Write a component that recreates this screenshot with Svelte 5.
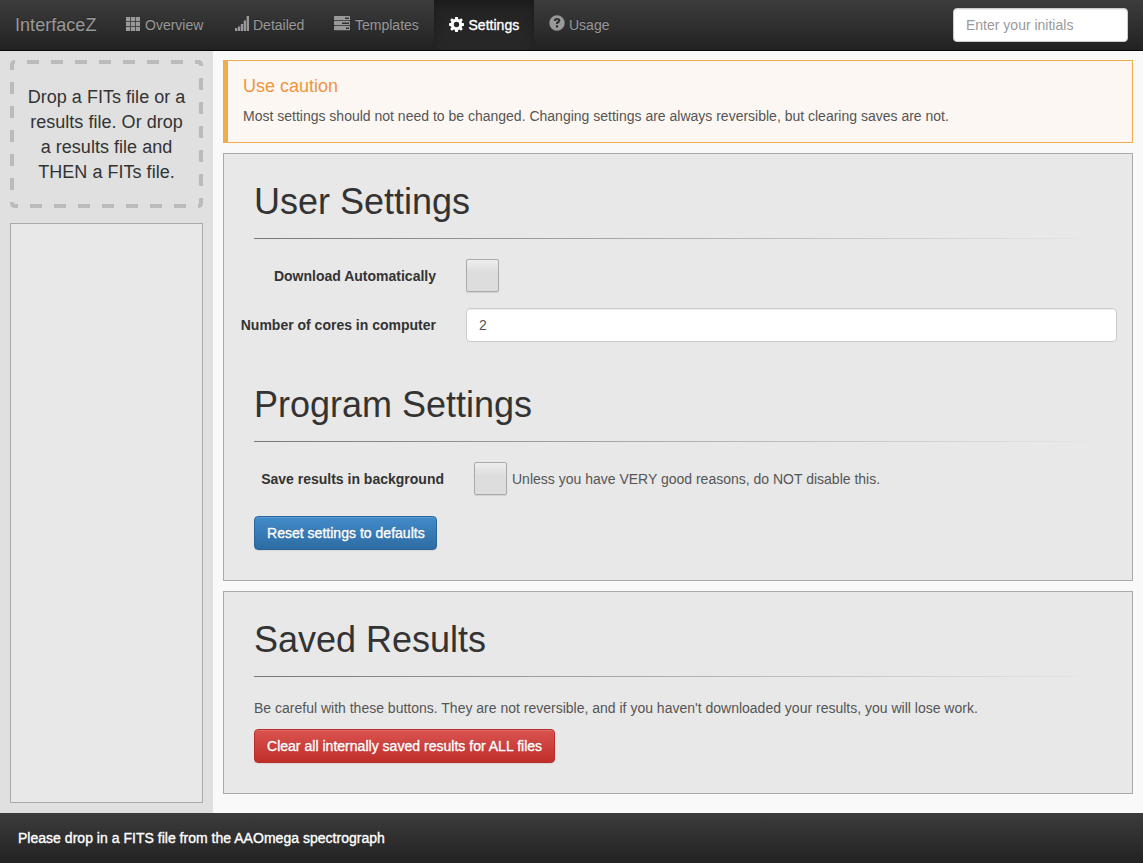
<script>
  let initials = $state('');
  let cores = $state('2');
</script>

<div class="app">
  <nav class="navbar">
    <div class="brand">InterfaceZ</div>
    <ul class="nav">
      <li style:width="108px">
        <svg width="14" height="14" viewBox="0 0 14 14"><path d="M0 0h4.200v4.200H0zM4.900 0h4.200v4.200H4.900zM9.800 0H14v4.200H9.800zM0 4.900h4.200v4.200H0zM4.900 4.900h4.200v4.200H4.900zM9.800 4.900H14v4.200H9.800zM0 9.800h4.200V14H0zM4.900 9.800h4.200V14H4.900zM9.800 9.800H14V14H9.800z" /></svg>
        <span>Overview</span>
      </li>
      <li style:width="101px">
        <svg width="14" height="15" viewBox="0 0 14 15"><path d="M0 12h2.300v3H0zM2.900 10.500h2.300V15H2.900zM5.800 8h2.300v7H5.800zM8.700 4.500H11V15H8.700zM11.600 0H14v15h-2.400z" /></svg>
        <span>Detailed</span>
      </li>
      <li style:width="114px">
        <svg width="16" height="15" viewBox="0 0 16 15"><path fill-rule="evenodd" d="M.7 0h14.600q.7 0 .7.700v2.900q0 .7-.7.700H.7q-.7 0-.7-.7V.7Q0 0 .7 0zM11 1.400v1.500h4V1.400zM.7 5h14.600q.7 0 .7.700v2.900q0 .7-.7.700H.7q-.7 0-.7-.7V5.700Q0 5 .7 5zM8 6.400v1.500h7V6.400zM.7 10h14.600q.7 0 .7.700v2.900q0 .7-.7.700H.7q-.7 0-.7-.7v-2.900Q0 10 .7 10zM12 11.400v1.500h3v-1.500z" /></svg>
        <span>Templates</span>
      </li>
      <li class="active" style:width="100px">
        <svg width="15" height="15" viewBox="0 0 15 15"><path fill-rule="evenodd" d="M6.200 0h2.600l.4 2 1.200.5L12.100 1.300 13.800 3 12.600 4.700l.5 1.200 1.900.4v2.500l-1.900.4-.5 1.200 1.200 1.700-1.700 1.700-1.700-1.200-1.200.5-.4 1.900H6.200l-.4-1.900-1.200-.5-1.700 1.200-1.700-1.700 1.200-1.700-.5-1.200L0 8.800V6.300l1.900-.4.5-1.200L1.200 3l1.700-1.700 1.700 1.200L5.800 2zM7.500 4.800a2.700 2.700 0 1 0 0 5.400 2.700 2.700 0 0 0 0-5.400z" /></svg>
        <span class="strong">Settings</span>
      </li>
      <li style:width="90px">
        <svg width="16" height="16" viewBox="0 0 16 16"><path fill-rule="evenodd" d="M8 .3a7.700 7.700 0 1 1 0 15.400A7.700 7.700 0 0 1 8 .3zM4.800 6h2.300c0-.8.300-1.200.9-1.200s.9.300.9.800c0 1-2 1.200-2 3.500h2.200c0-1.300 2.200-1.600 2.200-3.700C11.300 3.800 9.900 3 8.100 3 6 3 4.800 4.200 4.800 6zM6.900 10.200v2.200h2.200v-2.200z" /></svg>
        <span>Usage</span>
      </li>
    </ul>
    <input class="control initials" placeholder="Enter your initials" bind:value={initials} />
  </nav>

  <div class="body">
    <aside>
      <div class="drop">
        <svg class="dashes" width="193" height="148" viewBox="0 0 193 148">
          <path class="dashed" d="M17 2H173M191 18V126M2 22V130M20 146H176" />
          <path d="M2 10V5Q2 2 5 2M185 2H188Q191 2 191 5V6M191 138V143Q191 146 188 146M2 142V143Q2 146 5 146H8" />
        </svg>
        Drop a FITs file or a<br />results file. Or drop<br />a results file and<br />THEN a FITs file.
      </div>
      <div class="list"></div>
    </aside>
    <main>
      <section class="callout">
        <h4>Use caution</h4>
        <p>Most settings should not need to be changed. Changing settings are always reversible, but clearing saves are not.</p>
      </section>

      <section class="panel user">
        <h1>User Settings</h1>
        <hr />
        <div class="row">
          <b>Download Automatically</b>
          <button class="check" aria-label="Download Automatically"></button>
        </div>
        <div class="row cores">
          <b>Number of cores in computer</b>
          <input class="control" aria-label="Number of cores in computer" bind:value={cores} />
        </div>
        <h1 class="second">Program Settings</h1>
        <hr />
        <div class="row program">
          <b>Save results in background</b>
          <button class="check" aria-label="Save results in background"></button>
          <span class="note">Unless you have VERY good reasons, do NOT disable this.</span>
        </div>
        <button class="btn primary"><span class="strong">Reset settings to defaults</span></button>
      </section>

      <section class="panel saved">
        <h1>Saved Results</h1>
        <hr />
        <p class="careful">Be careful with these buttons. They are not reversible, and if you haven't downloaded your results, you will lose work.</p>
        <button class="btn danger"><span class="strong">Clear all internally saved results for ALL files</span></button>
      </section>
    </main>
  </div>

  <footer><span class="strong">Please drop in a FITS file from the AAOmega spectrograph</span></footer>
</div>

<style>
  :global(body) { margin: 0; overflow: hidden; }
  * { box-sizing: border-box; }
  .app {
    width: 1143px;
    height: 863px;
    display: flex;
    flex-direction: column;
    font: 14px/20px "Liberation Sans", Arial, sans-serif;
    color: #555;
    background: #f9f9f9;
    white-space: nowrap;
  }
  h1, h4, p, ul, hr { margin: 0; padding: 0; border: 0; }
  input, button { font: inherit; margin: 0; }
  .strong { -webkit-text-stroke: .35px #fff; letter-spacing: .02px; }
  .navbar {
    height: 51px;
    flex: none;
    display: flex;
    background: linear-gradient(#3c3c3c, #222);
    border-bottom: 1px solid #080808;
    color: #999;
    text-shadow: 0 -1px 0 rgba(0, 0, 0, .25);
  }
  .brand { width: 111px; padding: 15px 0 0 15px; font-size: 18px; letter-spacing: .04px; }
  .nav { display: flex; list-style: none; }
  .nav li { display: flex; padding: 15px 0 0 15px; gap: 5px; }
  .nav li svg { flex: none; margin-top: 2px; fill: currentColor; }
  .nav li:nth-child(2) { padding-left: 16px; gap: 4px; }
  .nav li:nth-child(2) svg { margin-top: 1px; }
  .nav li:nth-child(3) { padding-left: 14px; gap: 5px; }
  .nav li:nth-child(3) svg { margin-top: 1px; }
  .nav li:nth-child(4) { gap: 4.500px; }
  .nav li:nth-child(5) { gap: 4px; }
  .nav li:nth-child(5) svg { margin-top: 0; }
  .nav .active {
    color: #fff;
    background: linear-gradient(#222, #282828);
    box-shadow: inset 0 3px 9px rgba(0, 0, 0, .25);
  }
  .control {
    height: 34px;
    padding: 6px 12px;
    border: 1px solid #ccc;
    border-radius: 4px;
    background: #fff;
    color: #555;
    box-shadow: inset 0 1px 1px rgba(0, 0, 0, .075);
  }
  .initials { width: 175px; margin: 8px 15px 0 auto; }
  .initials::placeholder { color: #999; opacity: 1; }
  .body { flex: 1; display: flex; min-height: 0; }
  aside {
    width: 213px;
    padding: 9px 10px 10px;
    background: #e0e0e0;
    display: flex;
    flex-direction: column;
    gap: 15px;
  }
  .drop {
    position: relative;
    height: 148px;
    padding-top: 25px;
    text-align: center;
    color: #333;
    font-size: 18px;
    line-height: 25px;
    letter-spacing: .03px;
  }
  .dashes { position: absolute; left: 0; top: 0; }
  .dashes path { fill: none; stroke: #bbb; stroke-width: 4px; }
  .dashes .dashed { stroke-dasharray: 12 12; }
  .list { flex: 1; border: 1px solid #aaa; background: #e8e8e8; }
  main { flex: 1; padding: 9px 10px 19px; display: flex; flex-direction: column; gap: 10px; }
  .callout {
    height: 83px;
    padding: 15px 15px 0;
    border: 1px solid #f0ad4e;
    border-left-width: 5px;
    background: #fcf7f2;
  }
  h4 { font-size: 18px; line-height: 20px; font-weight: 400; color: #f0953f; margin-bottom: 10px; }
  .panel { border: 1px solid #aaa; background: #e8e8e8; padding: 28px 30px 0; }
  .user { height: 428px; }
  .saved { height: 203px; }
  h1 { font-size: 36px; line-height: 40px; font-weight: 400; color: #333; }
  hr { height: 1px; margin-top: 16px; background: linear-gradient(to right, #777, #e8e8e8); }
  .row { display: flex; align-items: center; margin: 20px -15px 0 -30px; }
  .row b { width: 212px; text-align: right; margin-right: 30px; color: #333; }
  .check {
    width: 33px;
    height: 33px;
    border: 1px solid #aaa;
    border-radius: 2px;
    background: linear-gradient(#eee, #ddd 40%);
    box-shadow: 0 1px 1px rgba(0, 0, 0, .1);
  }
  .row.cores { margin-top: 16px; }
  .cores .control { flex: 1; }
  .second { margin-top: 43px; }
  .row.program b { width: 220px; }
  .note { margin-left: 5px; }
  .btn {
    display: block;
    height: 34px;
    padding: 0 12px;
    border-radius: 4px;
    color: #fff;
    text-align: left;
    text-shadow: 0 -1px 0 rgba(0, 0, 0, .2);
    box-shadow: inset 0 1px 0 rgba(255, 255, 255, .15), 0 1px 1px rgba(0, 0, 0, .075);
  }
  .primary { width: 183px; margin-top: 21px; border: 1px solid #2b669a; background: linear-gradient(#428bca, #2d6ca2); }
  .danger { width: 301px; margin-top: 11px; border: 1px solid #b92c28; background: linear-gradient(#d9534f, #c12e2a); }
  .careful { margin-top: 21px; }
  footer {
    height: 50px;
    flex: none;
    padding: 15px 18px;
    color: #fff;
    background: linear-gradient(#3c3c3c, #222);
  }
</style>
